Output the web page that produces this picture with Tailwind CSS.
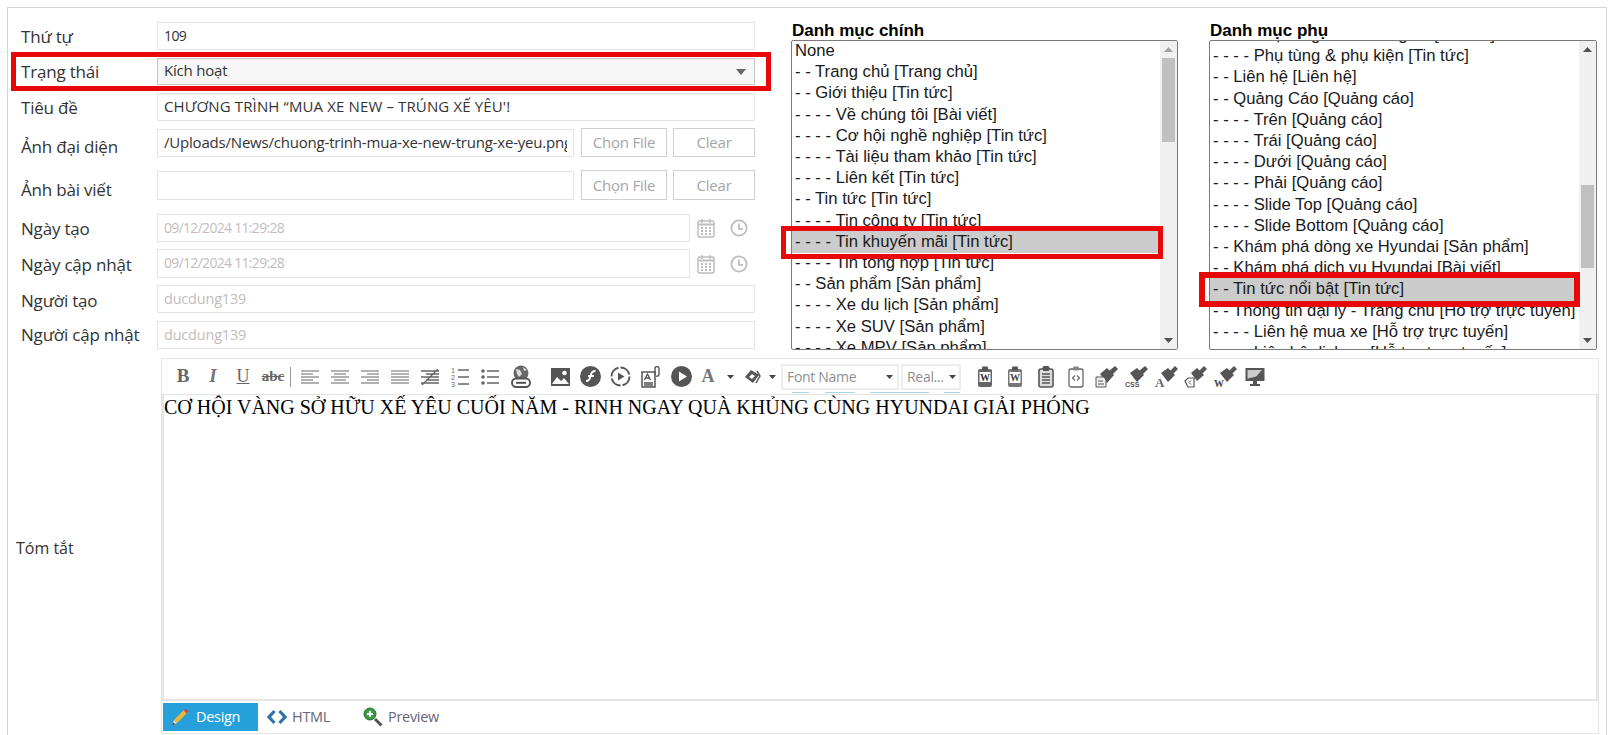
<!DOCTYPE html>
<html lang="en">
<head>
<meta charset="UTF-8" />
<title>Tin tức</title>
<script src="https://cdn.jsdelivr.net/npm/@tailwindcss/browser@4"></script>
</head>
<body class="bg-white overflow-hidden font-['Open_Sans',sans-serif] text-[#333]">
<div class="relative w-[1615px] h-[735px] overflow-hidden">
  <div class="ml-[7px] mt-[7px] w-[1600px] h-[728px] border-t border-l border-r border-[#d4d4d4] box-border flex flex-col">
    <div class="flex h-[342px]">
      <!-- form bên trái -->
      <div class="w-[748px] shrink-0 pt-[6px] text-[15px] tracking-[-0.2px]">
        <div class="flex h-[28px] mt-[8px]">
          <div class="w-[149px] pl-[13px] pt-[2px] text-[17px]">Thứ tự</div>
          <div class="w-[598px] h-full border border-[#e4e4e4] px-[6px] leading-[26px] text-[14px] tracking-[-0.6px]">109</div>
        </div>
        <div class="flex h-[27px] mt-[8px]">
          <div class="w-[149px] pl-[13px] text-[17px] leading-[27px]">Trạng thái</div>
          <div class="w-[598px] h-full border border-[#c8c8c8] bg-[#f7f7f7] px-[6px] flex justify-between items-center">
            <span class="-mt-[2px]">Kích hoạt</span>
            <svg width="10" height="6" viewBox="0 0 10 6" class="mr-[2px]"><path d="M0 0h10L5 6z" fill="#666"/></svg>
          </div>
        </div>
        <div class="flex h-[28px] mt-[8px]">
          <div class="w-[149px] text-[17px] pl-[13px] leading-[30px]">Tiêu đề</div>
          <div class="w-[598px] h-full border border-[#e4e4e4] px-[6px] leading-[25px] tracking-[0.13px]">CHƯƠNG TRÌNH “MUA XE NEW – TRÚNG XẾ YÊU'!</div>
        </div>
        <div class="flex h-[29px] mt-[7px]">
          <div class="w-[149px] text-[17px] pl-[13px] leading-[38px]">Ảnh đại diện</div>
          <div class="w-[417px] h-[28px] mt-[1px] border border-[#e4e4e4] px-[6px]"><div class="leading-[25px] overflow-hidden whitespace-nowrap">/Uploads/News/chuong-trinh-mua-xe-new-trung-xe-yeu.png</div></div>
          <div class="w-[86px] h-full ml-[7px] border border-[#d0d0d0] text-[#a6a6a6] text-center leading-[27px]">Chọn File</div>
          <div class="w-[82px] h-full ml-[6px] border border-[#d0d0d0] text-[#a6a6a6] text-center leading-[27px]">Clear</div>
        </div>
        <div class="flex h-[30px] mt-[13px]">
          <div class="w-[149px] text-[17px] pl-[13px] leading-[40px]">Ảnh bài viết</div>
          <div class="w-[417px] h-[29px] mt-[1px] border border-[#e4e4e4]"></div>
          <div class="w-[86px] h-full ml-[7px] border border-[#d0d0d0] text-[#a6a6a6] text-center leading-[29px]">Chọn File</div>
          <div class="w-[82px] h-full ml-[6px] border border-[#d0d0d0] text-[#a6a6a6] text-center leading-[29px]">Clear</div>
        </div>
        <div class="flex h-[28px] mt-[14px]">
          <div class="w-[149px] text-[17px] pl-[13px] leading-[30px]">Ngày tạo</div>
          <div class="w-[533px] h-full border border-[#e4e4e4] px-[6px] leading-[25px] text-[14px] tracking-[-0.7px] text-[#c4bcbc]">09/12/2024 11:29:28</div>
          <div class="flex items-center ml-[7px] gap-[15px]">
            <svg width="18" height="20" viewBox="0 0 18 20" fill="none" stroke="#bdbdbd"><rect x="1" y="3" width="16" height="16" rx="1.5" stroke-width="1.5"/><path d="M5 1v4M13 1v4" stroke-width="1.5"/><path d="M1 6.5h16" stroke-width="2"/><path d="M4 10h2M8 10h2M12 10h2M4 13h2M8 13h2M12 13h2M4 16h2M8 16h2M12 16h2" stroke-width="1.8"/></svg>
            <svg width="18" height="18" viewBox="0 0 18 18" fill="none" stroke="#bdbdbd" stroke-width="1.8"><circle cx="9" cy="9" r="7.6"/><path d="M9 4.5V9.8h4"/></svg>
          </div>
        </div>
        <div class="flex h-[29px] mt-[7px]">
          <div class="w-[149px] text-[17px] pl-[13px] leading-[32px]">Ngày cập nhật</div>
          <div class="w-[533px] h-full border border-[#e4e4e4] px-[6px] leading-[26px] text-[14px] tracking-[-0.7px] text-[#c4bcbc]">09/12/2024 11:29:28</div>
          <div class="flex items-center ml-[7px] gap-[15px]">
            <svg width="18" height="20" viewBox="0 0 18 20" fill="none" stroke="#bdbdbd"><rect x="1" y="3" width="16" height="16" rx="1.5" stroke-width="1.5"/><path d="M5 1v4M13 1v4" stroke-width="1.5"/><path d="M1 6.5h16" stroke-width="2"/><path d="M4 10h2M8 10h2M12 10h2M4 13h2M8 13h2M12 13h2M4 16h2M8 16h2M12 16h2" stroke-width="1.8"/></svg>
            <svg width="18" height="18" viewBox="0 0 18 18" fill="none" stroke="#bdbdbd" stroke-width="1.8"><circle cx="9" cy="9" r="7.6"/><path d="M9 4.5V9.8h4"/></svg>
          </div>
        </div>
        <div class="flex h-[28px] mt-[7px]">
          <div class="w-[149px] text-[17px] pl-[13px] leading-[32px]">Người tạo</div>
          <div class="w-[598px] h-full border border-[#e4e4e4] px-[6px] leading-[25px] text-[14.500px] text-[#c4bcbc]">ducdung139</div>
        </div>
        <div class="flex h-[28px] mt-[8px]">
          <div class="w-[149px] text-[17px] pl-[13px] leading-[28px]">Người cập nhật</div>
          <div class="w-[598px] h-full border border-[#e4e4e4] px-[6px] leading-[25px] text-[14.500px] text-[#c4bcbc]">ducdung139</div>
        </div>
      </div>

      <!-- danh mục chính -->
      <div class="w-[387px] ml-[35px] shrink-0 font-['Liberation_Sans',sans-serif] text-[16.670px] text-[#1a1a1a]">
        <div class="h-[32px] pt-[12px] pl-[1px] font-bold text-[17px] leading-[21px] text-black">Danh mục chính</div>
        <div class="h-[310px] border border-[#7a7a7a] rounded-[2px] flex overflow-hidden">
          <div class="flex-1 overflow-hidden whitespace-nowrap leading-[21.2px]">
            <div class="pl-[3px] -mt-[1px]">None</div>
            <div class="pl-[3px]">- - Trang chủ [Trang chủ]</div>
            <div class="pl-[3px]">- - Giới thiệu [Tin tức]</div>
            <div class="pl-[3px]">- - - - Về chúng tôi [Bài viết]</div>
            <div class="pl-[3px]">- - - - Cơ hội nghề nghiệp [Tin tức]</div>
            <div class="pl-[3px]">- - - - Tài liệu tham khảo [Tin tức]</div>
            <div class="pl-[3px]">- - - - Liên kết [Tin tức]</div>
            <div class="pl-[3px]">- - Tin tức [Tin tức]</div>
            <div class="pl-[3px]">- - - - Tin công ty [Tin tức]</div>
            <div class="pl-[3px] pb-px -mb-px bg-[#cccccc] relative">- - - - Tin khuyến mãi [Tin tức]</div>
            <div class="pl-[3px]">- - - - Tin tổng hợp [Tin tức]</div>
            <div class="pl-[3px]">- - Sản phẩm [Sản phẩm]</div>
            <div class="pl-[3px]">- - - - Xe du lịch [Sản phẩm]</div>
            <div class="pl-[3px]">- - - - Xe SUV [Sản phẩm]</div>
            <div class="pl-[3px]">- - - - Xe MPV [Sản phẩm]</div>
          </div>
          <div class="w-[17px] bg-[#f0f0f0] flex flex-col items-center">
            <div class="h-[17px] flex items-center justify-center"><svg width="9" height="5" viewBox="0 0 9 5"><path d="M0 5h9L4.500 0z" fill="#a3a3a3"/></svg></div>
            <div class="w-[13px] h-[84px] bg-[#c0c0c0]"></div>
            <div class="flex-1"></div>
            <div class="h-[17px] flex items-center justify-center"><svg width="9" height="5" viewBox="0 0 9 5"><path d="M0 0h9L4.500 5z" fill="#505050"/></svg></div>
          </div>
        </div>
      </div>

      <!-- danh mục phụ -->
      <div class="w-[388px] ml-[31px] shrink-0 font-['Liberation_Sans',sans-serif] text-[16.670px] text-[#1a1a1a]">
        <div class="h-[32px] pt-[12px] pl-[1px] font-bold text-[17px] leading-[21px] text-black">Danh mục phụ</div>
        <div class="h-[310px] border border-[#7a7a7a] rounded-[2px] flex overflow-hidden">
          <div class="flex-1 overflow-hidden whitespace-nowrap leading-[21.2px]">
            <div class="pl-[3px] -mt-[17px]">- - - - Phụ tùng chính hãng xe [Tin tức]</div>
            <div class="pl-[3px]">- - - - Phụ tùng &amp; phụ kiện [Tin tức]</div>
            <div class="pl-[3px]">- - Liên hệ [Liên hệ]</div>
            <div class="pl-[3px]">- - Quảng Cáo [Quảng cáo]</div>
            <div class="pl-[3px]">- - - - Trên [Quảng cáo]</div>
            <div class="pl-[3px]">- - - - Trái [Quảng cáo]</div>
            <div class="pl-[3px]">- - - - Dưới [Quảng cáo]</div>
            <div class="pl-[3px]">- - - - Phải [Quảng cáo]</div>
            <div class="pl-[3px]">- - - - Slide Top [Quảng cáo]</div>
            <div class="pl-[3px]">- - - - Slide Bottom [Quảng cáo]</div>
            <div class="pl-[3px]">- - Khám phá dòng xe Hyundai [Sản phẩm]</div>
            <div class="pl-[3px]">- - Khám phá dịch vụ Hyundai [Bài viết]</div>
            <div class="pl-[3px] pb-px -mb-px bg-[#cccccc] relative">- - Tin tức nổi bật [Tin tức]</div>
            <div class="pl-[3px]">- - Thông tin đại lý - Trang chủ [Hỗ trợ trực tuyến]</div>
            <div class="pl-[3px]">- - - - Liên hệ mua xe [Hỗ trợ trực tuyến]</div>
            <div class="pl-[3px]">- - - - Liên hệ dịch vụ [Hỗ trợ trực tuyến]</div>
          </div>
          <div class="w-[17px] bg-[#f0f0f0] flex flex-col items-center">
            <div class="h-[17px] flex items-center justify-center"><svg width="9" height="5" viewBox="0 0 9 5"><path d="M0 5h9L4.500 0z" fill="#505050"/></svg></div>
            <div class="w-[13px] h-[83px] mt-[127px] bg-[#c0c0c0]"></div>
            <div class="flex-1"></div>
            <div class="h-[17px] flex items-center justify-center"><svg width="9" height="5" viewBox="0 0 9 5"><path d="M0 0h9L4.500 5z" fill="#505050"/></svg></div>
          </div>
        </div>
      </div>
    </div>

    <!-- tóm tắt + editor -->
    <div class="flex mt-[8px]">
      <div class="w-[153px] shrink-0 pl-[8px] pt-[4px] flex items-center text-[16px]">Tóm tắt</div>
      <div class="w-[1438px] h-[376px] border border-[#e4e4e4] box-border flex flex-col">
        <div class="relative h-[35px] shrink-0 flex items-center pl-[6px] text-[#666]">
          <span class="w-[30px] text-center font-['Liberation_Serif',serif] font-bold text-[19px]">B</span>
          <span class="w-[30px] text-center font-['Liberation_Serif',serif] font-bold italic text-[19px] text-[#777]">I</span>
          <span class="w-[30px] text-center font-['Liberation_Serif',serif] text-[18px] underline">U</span>
          <span class="w-[30px] text-center font-['Liberation_Serif',serif] font-bold text-[15px] line-through">abc</span>
          <span class="w-[1px] h-[20px] bg-[#999] mx-[2px]"></span>
          <span class="w-[30px] ml-[2px] flex justify-center"><svg width="18" height="14" viewBox="0 0 18 14" stroke="#666" stroke-width="1.2"><path d="M0 1h18M0 4h12M0 7h18M0 10h12M0 13h18"/></svg></span>
          <span class="w-[30px] flex justify-center"><svg width="18" height="14" viewBox="0 0 18 14" stroke="#666" stroke-width="1.2"><path d="M0 1h18M3 4h12M0 7h18M3 10h12M0 13h18"/></svg></span>
          <span class="w-[30px] flex justify-center"><svg width="18" height="14" viewBox="0 0 18 14" stroke="#666" stroke-width="1.2"><path d="M0 1h18M6 4h12M0 7h18M6 10h12M0 13h18"/></svg></span>
          <span class="w-[30px] flex justify-center"><svg width="18" height="14" viewBox="0 0 18 14" stroke="#666" stroke-width="1.2"><path d="M0 1h18M0 4h18M0 7h18M0 10h18M0 13h18"/></svg></span>
          <span class="w-[30px] flex justify-center"><svg width="18" height="16" viewBox="0 0 18 16" stroke="#666" stroke-width="1.2"><path d="M0 2h18M5 5h13M0 8h18M5 11h13M0 14h18M1 16L17 0" stroke-width="1.3"/></svg></span>
          <span class="w-[30px] flex justify-center"><svg width="18" height="20" viewBox="0 0 18 20" stroke="#666" stroke-width="1.3"><path d="M7 3h11M7 10h11M7 17h11"/><text x="0" y="6" font-size="7" font-family="Liberation Sans" fill="#666" stroke="none">1</text><text x="0" y="13" font-size="7" font-family="Liberation Sans" fill="#666" stroke="none">2</text><text x="0" y="20" font-size="7" font-family="Liberation Sans" fill="#666" stroke="none">3</text></svg></span>
          <span class="w-[30px] flex justify-center"><svg width="18" height="16" viewBox="0 0 18 16" stroke="#666" stroke-width="1.3"><path d="M6 2h12M6 8h12M6 14h12"/><circle cx="2" cy="2" r="1.800" fill="#666" stroke="none"/><circle cx="2" cy="8" r="1.800" fill="#666" stroke="none"/><circle cx="2" cy="14" r="1.800" fill="#666" stroke="none"/></svg></span>
          <span class="w-[30px] ml-[1px] flex justify-center"><svg width="22" height="24" viewBox="0 0 22 24"><circle cx="11" cy="8" r="7.500" fill="#666"/><path d="M6 4l4 1 2 4-3 3-2-3zM13 2l4 3-3 1z" fill="#ddd"/><rect x="2" y="13.500" width="18" height="8.500" rx="4.200" fill="#fff" stroke="#555" stroke-width="2"/><rect x="6" y="16.800" width="10" height="2" fill="#555"/></svg></span>
          <span class="w-[30px] ml-[9px] flex justify-center"><svg width="19" height="18" viewBox="0 0 19 18"><rect width="19" height="18" fill="#555"/><path d="M1 16l5-7 4 4 3-3 5 6z" fill="#fff"/><circle cx="13.500" cy="5" r="2.300" fill="#fff"/></svg></span>
          <span class="w-[30px] flex justify-center"><svg width="21" height="21" viewBox="0 0 21 21"><circle cx="10.500" cy="10.500" r="10.500" fill="#555"/><path d="M6 15c3 0 4-2 4.500-5S12 5 15.500 5M8 10h6" stroke="#fff" stroke-width="1.800" fill="none"/></svg></span>
          <span class="w-[30px] flex justify-center"><svg width="21" height="21" viewBox="0 0 21 21" fill="none" stroke="#555" stroke-width="2"><path d="M10.500 1.500a9 9 0 0 1 9 9M19.500 10.500a9 9 0 0 1-9 9M10.500 19.500a9 9 0 0 1-9-9M1.500 10.500a9 9 0 0 1 9-9" stroke-dasharray="12 2"/><path d="M8 6.500v8l6.500-4z" fill="#555" stroke="none"/></svg></span>
          <span class="w-[30px] ml-[1px] flex justify-center"><svg width="20" height="22" viewBox="0 0 20 22" fill="none" stroke="#555"><rect x="1" y="6" width="13" height="15" fill="#fff" stroke-width="1.500"/><path d="M3.500 14l3-6 3 6M4.500 12h4M3 17h9M3 19h9" stroke-width="1.300"/><path d="M14 9V2.500a2 2 0 0 1 4 0V8a2 2 0 0 1-3 2" stroke-width="1.400"/></svg></span>
          <span class="w-[30px] flex justify-center"><svg width="21" height="21" viewBox="0 0 21 21"><circle cx="10.500" cy="10.500" r="10.500" fill="#555"/><path d="M8 5.500v10l8-5z" fill="#fff"/></svg></span>
          <span class="w-[24px] text-center font-['Liberation_Serif',serif] font-bold text-[18px] text-[#777]">A</span>
          <span class="w-[20px] flex justify-center"><svg width="7" height="4" viewBox="0 0 7 4"><path d="M0 0h7L3.500 4z" fill="#444"/></svg></span>
          <span class="w-[24px] flex justify-center"><svg width="17" height="15" viewBox="0 0 17 15"><path d="M1 8l6-7 8 5-6 8z" fill="#555"/><path d="M5 8l3-3 3 2-3 3z" fill="#fff"/><path d="M13 2l3 5-4 7" stroke="#555" stroke-width="1.500" fill="none"/></svg></span>
          <span class="w-[16px] flex justify-center"><svg width="7" height="4" viewBox="0 0 7 4"><path d="M0 0h7L3.500 4z" fill="#444"/></svg></span>
          <span class="w-[118px] h-[26px] ml-[1px] border-2 border-[#ececec] flex items-center justify-between pl-[4px] pr-[4px] text-[14px] tracking-[-0.3px] text-[#8f8f8f]">Font Name<svg width="7" height="4" viewBox="0 0 7 4"><path d="M0 0h7L3.500 4z" fill="#444"/></svg></span>
          <span class="w-[60px] h-[26px] ml-[2px] border-2 border-[#ececec] flex items-center justify-between pl-[4px] pr-[3px] text-[14px] tracking-[-0.3px] text-[#8f8f8f]">Real...<svg width="7" height="4" viewBox="0 0 7 4"><path d="M0 0h7L3.500 4z" fill="#444"/></svg></span>
          <span class="w-[30px] ml-[9px] flex justify-center"><svg width="16" height="22" viewBox="0 0 16 22"><rect x="1" y="3" width="14" height="18" rx="2" fill="#666"/><rect x="5" y="0.500" width="6" height="4" rx="1" fill="#555"/><rect x="2.500" y="6" width="11" height="10" fill="#fff"/><text x="8" y="15" text-anchor="middle" font-size="10" font-weight="700" font-family="Liberation Serif" fill="#333">W</text></svg></span>
          <span class="w-[30px] flex justify-center"><svg width="16" height="22" viewBox="0 0 16 22"><rect x="1" y="3" width="14" height="18" rx="2" fill="#777"/><rect x="5" y="0.500" width="6" height="4" rx="1" fill="#555"/><rect x="2.500" y="6" width="11" height="11" fill="#fff"/><text x="8" y="15" text-anchor="middle" font-size="10" font-weight="700" font-family="Liberation Serif" fill="#444">W</text></svg></span>
          <span class="w-[30px] ml-[1px] flex justify-center"><svg width="16" height="22" viewBox="0 0 16 22" fill="none" stroke="#555"><rect x="1" y="3" width="14" height="18" rx="2" fill="#ddd" stroke-width="1.600"/><rect x="5" y="0.500" width="6" height="4" rx="1" fill="#555"/><path d="M4 8h8M4 11h8M4 14h8M4 17h8" stroke-width="1.400"/></svg></span>
          <span class="w-[30px] flex justify-center"><svg width="16" height="22" viewBox="0 0 16 22" fill="none" stroke="#666"><rect x="1" y="3" width="14" height="18" rx="2" fill="#fff" stroke-width="1.300"/><rect x="5" y="0.500" width="6" height="4" rx="1" fill="#888" stroke="none"/><path d="M7 9.500L4.500 12 7 14.500M9 9.500l2.500 2.500L9 14.500" stroke-width="1.200"/></svg></span>
          <span class="w-[30px] flex justify-center"><svg width="23" height="22" viewBox="0 0 23 22"><path d="M5 8l7-6 7 7-7 8z" fill="#555"/><path d="M14 5l6-5 3 3-6 6z" fill="#555"/><path d="M1 11h8l2 3v7H1z" fill="#eee" stroke="#555"/><path d="M3 15h5M3 18h6" stroke="#555"/></svg></span>
          <span class="w-[30px] flex justify-center"><svg width="23" height="22" viewBox="0 0 23 22"><path d="M5 7l7-5 7 7-7 7z" fill="#555"/><path d="M14 5l6-5 3 3-6 6z" fill="#555"/><text x="0" y="21" font-size="7" font-weight="700" font-family="Liberation Sans" fill="#555">CSS</text></svg></span>
          <span class="w-[30px] flex justify-center"><svg width="23" height="22" viewBox="0 0 23 22"><path d="M6 7l7-5 7 7-7 7z" fill="#555"/><path d="M15 5l5-5 3 3-5 5z" fill="#555"/><text x="0" y="21" font-size="13" font-weight="700" font-family="Liberation Serif" fill="#666">A</text></svg></span>
          <span class="w-[29px] flex justify-center"><svg width="23" height="22" viewBox="0 0 23 22"><path d="M7 7l6-5 7 7-7 6z" fill="#555"/><path d="M15 5l5-5 3 3-5 5z" fill="#555"/><path d="M1 15l3-3h6v9H4z" fill="#fff" stroke="#555" stroke-width="1.200"/><path d="M7 14.500l-2 2L7 18.500" fill="none" stroke="#555"/></svg></span>
          <span class="w-[30px] flex justify-center"><svg width="23" height="22" viewBox="0 0 23 22"><path d="M6 7l7-5 7 7-7 7z" fill="#555"/><path d="M15 5l5-5 3 3-5 5z" fill="#555"/><text x="0" y="21" font-size="10" font-weight="700" font-family="Liberation Serif" fill="#444">W</text></svg></span>
          <span class="w-[30px] flex justify-center"><svg width="20" height="20" viewBox="0 0 20 20"><rect x="0.500" y="1" width="19" height="13" fill="#555"/><path d="M2.500 12V3h15c-3 1-4 6-8 7-3 .5-5 1-7 2z" fill="#ccc"/><rect x="8" y="14" width="4" height="3" fill="#555"/><rect x="5" y="17" width="10" height="2" fill="#555"/></svg></span>
          <span class="absolute bottom-[1px] left-[630px] w-[17px] h-[1px] bg-[#a8d4ea]"></span>
          <span class="absolute bottom-[1px] left-[663px] w-[30px] h-[1px] bg-[#a8d4ea]"></span>
          <span class="absolute bottom-[1px] left-[708px] w-[59px] h-[1px] bg-[#a8d4ea]"></span>
          <span class="absolute bottom-[1px] left-[782px] w-[16px] h-[1px] bg-[#a8d4ea]"></span>
        </div>
        <div class="h-[307px] shrink-0 border-t border-l-2 border-b-2 border-r-2 border-[#e4e4e4] box-border overflow-hidden pt-[1px] font-['Liberation_Serif',serif] text-[20px] leading-[22px] text-black">CƠ HỘI VÀNG SỞ HỮU XẾ YÊU CUỐI NĂM - RINH NGAY QUÀ KHỦNG CÙNG HYUNDAI GIẢI PHÓNG</div>
        <div class="flex-1 flex items-center pl-[1px] text-[14.500px] tracking-[-0.3px]">
          <div class="w-[95px] h-[28px] bg-[#26a0da] text-white flex items-center pl-[8px] gap-[7px]">
            <svg width="18" height="18" viewBox="0 0 18 18"><path d="M3 12L13 2l3 3L6 15z" fill="#f2b632"/><path d="M12.500 2.500l2-2 3 3-2 2z" fill="#c8504a"/><path d="M3 12l3 3-5 2.500z" fill="#f3dcae"/><path d="M1 17.500l1.500-3 1.500 1.500z" fill="#333"/></svg>
            <span>Design</span>
          </div>
          <div class="w-[95px] flex items-center pl-[9px] gap-[5px] text-[#667]">
            <svg width="20" height="16" viewBox="0 0 20 16" fill="none" stroke="#2f73ad" stroke-width="3.200"><path d="M7.500 2L2 8l5.500 6M12.500 2L18 8l-5.500 6"/></svg>
            <span>HTML</span>
          </div>
          <div class="flex items-center gap-[5px] text-[#667] pl-[10px]">
            <svg width="20" height="20" viewBox="0 0 20 20"><path d="M12 12l6.500 6.500" stroke="#555" stroke-width="3"/><circle cx="7" cy="7" r="6" fill="#3c9a46" stroke="#1f6d2a" stroke-width="1"/><path d="M7 4v6M4 7h6" stroke="#fff" stroke-width="2"/></svg>
            <span>Preview</span>
          </div>
        </div>
      </div>
    </div>
  </div>

  <!-- khung đỏ đè lên ảnh -->
  <div class="absolute left-[11px] top-[52px] w-[760px] h-[39px] border-[5px] border-[#e80808]"></div>
  <div class="absolute left-[781px] top-[226px] w-[382px] h-[33px] border-[5px] border-[#e80808]"></div>
  <div class="absolute left-[1199px] top-[272px] w-[381px] h-[35px] border-[6px] border-[#e80808]"></div>
</div>
</body>
</html>
